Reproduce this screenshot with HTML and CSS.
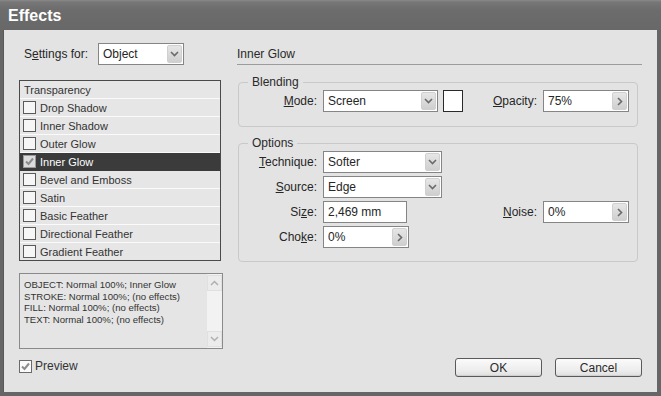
FILE: index.html
```html
<!DOCTYPE html>
<html>
<head>
<meta charset="utf-8">
<title>Effects</title>
<link rel="stylesheet" href="styles.css">
</head>
<body>
<div class="window">
  <div class="titlebar">Effects</div>
  <div class="content">
    <div class="left">
      <div class="settings-row">
        <span class="lbl settings-lbl">S<u>e</u>ttings for:</span>
        <div class="select sel-object"><span class="val">Object</span><span class="dd"><svg width="9" height="6" viewBox="0 0 9 6"><polyline points="1,1 4.5,4.5 8,1" fill="none" stroke="#6a6a6a" stroke-width="1.6"/></svg></span></div>
      </div>
      <div class="list">
        <div class="row head">Transparency</div>
        <div class="row"><span class="cb"></span>Drop Shadow</div>
        <div class="row"><span class="cb"></span>Inner Shadow</div>
        <div class="row"><span class="cb"></span>Outer Glow</div>
        <div class="row selected"><span class="cb checked"><svg width="11" height="11" viewBox="0 0 11 11"><polyline points="2,5.5 4.5,8 9,2.5" fill="none" stroke="#8c8c8c" stroke-width="2"/></svg></span>Inner Glow</div>
        <div class="row"><span class="cb"></span>Bevel and Emboss</div>
        <div class="row"><span class="cb"></span>Satin</div>
        <div class="row"><span class="cb"></span>Basic Feather</div>
        <div class="row"><span class="cb"></span>Directional Feather</div>
        <div class="row last"><span class="cb"></span>Gradient Feather</div>
      </div>
      <div class="summary">
        <div class="summary-text">
          <div>OBJECT: Normal 100%; Inner Glow</div>
          <div>STROKE: Normal 100%; (no effects)</div>
          <div>FILL: Normal 100%; (no effects)</div>
          <div>TEXT: Normal 100%; (no effects)</div>
        </div>
        <div class="scroll">
          <span class="sbtn"><svg width="9" height="6" viewBox="0 0 9 6"><polyline points="1,5 4.5,1.5 8,5" fill="none" stroke="#b0b0b0" stroke-width="1.5"/></svg></span>
          <span class="sbtn"><svg width="9" height="6" viewBox="0 0 9 6"><polyline points="1,1 4.5,4.5 8,1" fill="none" stroke="#b0b0b0" stroke-width="1.5"/></svg></span>
        </div>
      </div>
      <div class="preview"><span class="cb checked"><svg width="11" height="11" viewBox="0 0 11 11"><polyline points="2,5.5 4.5,8 9,2.5" fill="none" stroke="#8c8c8c" stroke-width="2"/></svg></span>Preview</div>
    </div>

    <div class="right">
      <div class="heading">Inner Glow</div>

      <fieldset class="group blending">
        <legend>Blending</legend>
        <div class="brow">
          <span class="flabel"><u>M</u>ode:</span>
          <div class="select sel-mode"><span class="val">Screen</span><span class="dd"><svg width="9" height="6" viewBox="0 0 9 6"><polyline points="1,1 4.5,4.5 8,1" fill="none" stroke="#6a6a6a" stroke-width="1.6"/></svg></span></div>
          <span class="swatch"></span>
          <span class="spacer"></span>
          <span class="flabel2"><u>O</u>pacity:</span>
          <div class="input inp-right"><span class="val">75%</span><span class="ab"><svg width="6" height="9" viewBox="0 0 6 9"><polyline points="1,1 4.5,4.5 1,8" fill="none" stroke="#6a6a6a" stroke-width="1.6"/></svg></span></div>
        </div>
      </fieldset>

      <fieldset class="group options">
        <legend>Options</legend>
        <div class="ogrid">
          <span class="flabel"><u>T</u>echnique:</span>
          <div class="select sel-opt"><span class="val">Softer</span><span class="dd"><svg width="9" height="6" viewBox="0 0 9 6"><polyline points="1,1 4.5,4.5 8,1" fill="none" stroke="#6a6a6a" stroke-width="1.6"/></svg></span></div>
          <span class="fill"></span>

          <span class="flabel"><u>S</u>ource:</span>
          <div class="select sel-opt"><span class="val">Edge</span><span class="dd"><svg width="9" height="6" viewBox="0 0 9 6"><polyline points="1,1 4.5,4.5 8,1" fill="none" stroke="#6a6a6a" stroke-width="1.6"/></svg></span></div>
          <span class="fill"></span>

          <span class="flabel">Si<u>z</u>e:</span>
          <div class="input inp-size"><span class="val">2,469 mm</span></div>
          <span class="noise">
            <span class="flabel2"><u>N</u>oise:</span>
            <span class="input inp-right"><span class="val">0%</span><span class="ab"><svg width="6" height="9" viewBox="0 0 6 9"><polyline points="1,1 4.5,4.5 1,8" fill="none" stroke="#6a6a6a" stroke-width="1.6"/></svg></span></span>
          </span>

          <span class="flabel">Cho<u>k</u>e:</span>
          <div class="input inp-choke"><span class="val">0%</span><span class="ab"><svg width="6" height="9" viewBox="0 0 6 9"><polyline points="1,1 4.5,4.5 1,8" fill="none" stroke="#6a6a6a" stroke-width="1.6"/></svg></span></div>
          <span class="fill"></span>
        </div>
      </fieldset>

      <div class="buttons">
        <button class="btn">OK</button>
        <button class="btn">Cancel</button>
      </div>
    </div>
  </div>
</div>
</body>
</html>
```
FILE: styles.css
```css
* { box-sizing: border-box; }
html, body { margin: 0; padding: 0; }
body {
  width: 661px;
  height: 396px;
  overflow: hidden;
  background: #5e5e5e;
  font-family: "Liberation Sans", Arial, sans-serif;
  font-size: 12px;
  color: #262626;
}
u { text-decoration: underline; text-underline-offset: 1px; }

.window {
  width: 661px;
  height: 396px;
  background: #666;
  padding: 0 4px 4px 3px;
  display: flex;
  flex-direction: column;
}
.titlebar {
  height: 30px;
  flex: none;
  margin: 0 -4px 0 -3px;
  padding: 0 0 0 8px;
  background: linear-gradient(#8a8a8a 0, #777 2px, #6c6c6c 10px, #686868 100%);
  color: #fff;
  font-weight: bold;
  font-size: 16px;
  line-height: 31px;
}
.content {
  flex: 1;
  background: #e3e3e3;
  display: grid;
  grid-template-columns: 204px 405px;
  column-gap: 14px;
  padding: 13px 16px 15px 15px;
  border-left: 1px solid #585858;
}

/* left column */
.left { display: flex; flex-direction: column; }
.settings-row { display: flex; align-items: center; height: 22px; }
.settings-lbl { width: 79px; padding-left: 5px; flex: none; }

.select, .input {
  display: flex;
  align-items: center;
  height: 22px;
  background: #fff;
  border: 1px solid #858585;
}
.select .val, .input .val { flex: 1; padding-left: 4px; white-space: nowrap; }
.dd, .ab {
  flex: none;
  width: 15px;
  height: 18px;
  margin-right: 1px;
  border-radius: 2px;
  background: linear-gradient(#e6e6e6, #cfcfcf);
  border: 1px solid #d0d0d0;
  display: flex;
  align-items: center;
  justify-content: center;
}
.sel-object { width: 86px; }

.list {
  margin-top: 15px;
  width: 202px;
  border: 1px solid #4a4a4a;
  background: #e6e6e6;
  font-size: 11px;
  color: #333;
}
.row {
  height: 18px;
  display: flex;
  align-items: center;
  padding-left: 3px;
  border-bottom: 1px solid #fafafa;
}
.row.last { border-bottom: none; height: 17px; }
.row.head { padding-left: 4px; }
.row.selected { background: #3b3b3b; color: #fff; border-bottom-color: #3b3b3b; }
.cb {
  width: 13px;
  height: 13px;
  flex: none;
  border: 1px solid #5a5a5a;
  background: #f6f6f6;
  margin-right: 4px;
  display: flex;
  align-items: center;
  justify-content: center;
}
.row.selected .cb { background: #dcdcdc; border-color: #9a9a9a; }

.summary {
  margin-top: 12px;
  width: 204px;
  height: 76px;
  border: 1px solid #8a8a8a;
  display: flex;
  background: #e5e5e5;
}
.summary-text {
  flex: 1;
  padding: 5px 0 0 4px;
  font-size: 9.6px;
  line-height: 11.7px;
  color: #333;
  white-space: nowrap;
}
.scroll {
  width: 15px;
  flex: none;
  background: #f2f2f2;
  display: flex;
  flex-direction: column;
  justify-content: space-between;
  padding: 1px 0;
}
.sbtn {
  height: 16px;
  background: #ececec;
  border: 1px solid #e0e0e0;
  display: flex;
  align-items: center;
  justify-content: center;
}

.preview {
  margin-top: 10px;
  display: flex;
  align-items: center;
  height: 14px;
  font-size: 12px;
  color: #333;
}
.preview .cb { margin-right: 3px; background: #fafafa; border-color: #6a6a6a; }

/* right column */
.right { display: flex; flex-direction: column; padding-top: 4px; }
.heading {
  line-height: 14px;
  padding-bottom: 3px;
  border-bottom: 1px solid #9c9c9c;
  color: #2a2a2a;
}
.group {
  margin: 0 4px 0 1px;
  border: 1px solid #c9c9c9;
  border-radius: 4px;
  padding: 1px 8px 14px 0;
  min-width: 0;
}
.group legend {
  margin-left: 9px;
  padding: 0 4px;
  line-height: 14px;
  color: #2a2a2a;
}
.blending { margin-top: 10px; }
.options { margin-top: 9px; padding-bottom: 13px; }

.brow { display: flex; align-items: center; height: 22px; }
.flabel { width: 84px; flex: none; text-align: right; padding-right: 6px; }
.flabel2 { padding-right: 6px; }
.sel-mode { width: 115px; flex: none; }
.swatch {
  width: 20px;
  height: 22px;
  margin-left: 5px;
  background: #fff;
  border: 1px solid #2a2a2a;
  flex: none;
}
.spacer { flex: 1; }
.inp-right { width: 86px; flex: none; }

.ogrid {
  display: grid;
  grid-template-columns: 84px auto 1fr;
  grid-auto-rows: 22px;
  row-gap: 3px;
  align-items: center;
}
.ogrid .flabel { width: auto; }
.sel-opt { width: 119px; }
.inp-size { width: 84px; }
.inp-choke { width: 86px; }
.noise { display: flex; align-items: center; justify-content: flex-end; }

.buttons {
  margin-top: auto;
  display: flex;
  justify-content: flex-end;
  gap: 13px;
}
.btn {
  width: 87px;
  height: 19px;
  padding: 0;
  font-family: "Liberation Sans", Arial, sans-serif;
  font-size: 12px;
  color: #2a2a2a;
  border: 1px solid #5a5a5a;
  border-radius: 3px;
  background: linear-gradient(#fbfbfb, #ececec 70%, #dedede);
  box-shadow: inset 0 -1px 0 #d0d0d0;
}
```
